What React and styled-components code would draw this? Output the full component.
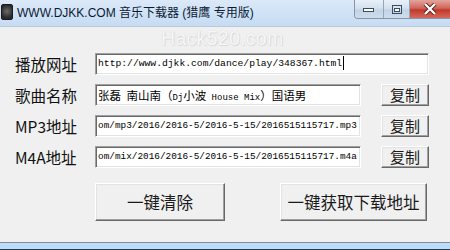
import React from "react";
import styled, { createGlobalStyle } from "styled-components";

const GlobalStyle = createGlobalStyle`
  html, body { margin: 0; padding: 0; background: #f0f0f0; }
  body { font-family: "Liberation Sans", "Noto Sans CJK SC", sans-serif; }
`;

const Window = styled.div`
  position: relative;
  width: 450px;
  height: 250px;
  display: flex;
  flex-direction: column;
  overflow: hidden;
  background: #f0f0f0;
`;

const TitleBar = styled.div`
  height: 26px;
  display: flex;
  align-items: flex-start;
  background: linear-gradient(#dbe9f8, #c6dcf3);
  border-bottom: 1px solid #b9c9da;
`;

const AppIcon = styled.div`
  width: 10px;
  height: 14px;
  margin: 4px 0 0 1px;
  border-radius: 2px;
  background: radial-gradient(circle at 50% 45%, #6b6b6b, #2a2a2a 70%);
  border: 1px solid #1a1a1a;
`;

const Title = styled.div`
  margin: 6px 0 0 4px;
  font-size: 12px;
  line-height: 15px;
  color: #0b1a33;
  white-space: nowrap;
`;

const Controls = styled.div`
  margin-left: auto;
  display: flex;
  height: 18px;
  border: 1px solid #8596ab;
  border-top: none;
  border-right: none;
  border-bottom-left-radius: 4px;
  overflow: hidden;
`;

const CtrlButton = styled.div`
  width: ${(p) => p.$w}px;
  height: 18px;
  display: flex;
  align-items: center;
  justify-content: center;
  background: ${(p) =>
    p.$close
      ? "linear-gradient(#e4a59c, #d0665b 45%, #c0392b 55%, #d46a5c)"
      : "linear-gradient(#e8eff8, #d5e1ef 45%, #c3d3e6 55%, #cedcec)"};
  border-right: ${(p) => (p.$close ? "none" : "1px solid #95a6bb")};
`;

const Client = styled.div`
  flex: 1;
  padding: 26px 0 0 15px;
  display: flex;
  flex-direction: column;
  gap: 9px;
`;

const Row = styled.div`
  width: 414px;
  height: 22px;
  display: flex;
  align-items: center;
`;

const Label = styled.div`
  width: 80px;
  flex: none;
  font-family: "Noto Sans CJK SC", sans-serif;
  font-size: 15.5px;
  color: #111;
  white-space: nowrap;
`;

const Field = styled.div`
  flex: 1;
  height: 22px;
  box-sizing: border-box;
  background: #fff;
  border: 1px solid;
  border-color: #a0a0a0 #ffffff #ffffff #a0a0a0;
  box-shadow: inset 1px 1px 0 #696969, inset -1px -1px 0 #e3e3e3;
  padding: 0 0 0 2px;
  overflow: hidden;
  white-space: pre;
  line-height: 20px;
  font-family: "Liberation Mono", "Noto Sans CJK SC", monospace;
  font-size: ${(p) => p.$size}px;
  color: #000;
`;

const Cjk = styled.span`
  font-family: "Noto Sans CJK SC", sans-serif;
  font-size: 11.5px;
`;

const Caret = styled.span`
  display: inline-block;
  width: 1px;
  height: 14px;
  margin-left: 1px;
  vertical-align: middle;
  background: #000;
`;

const CopyButton = styled.button`
  width: 48px;
  height: 22px;
  margin-left: 20px;
  flex: none;
  padding: 0;
  box-sizing: border-box;
  background: #f0f0f0;
  border: 1px solid;
  border-color: #ffffff #696969 #696969 #ffffff;
  box-shadow: inset -1px -1px 0 #a0a0a0, inset 1px 1px 0 #e3e3e3;
  font-family: "Noto Sans CJK SC", sans-serif;
  font-size: 15px;
  line-height: 20px;
  color: #1a1a1a;
`;

const Actions = styled.div`
  display: flex;
  gap: 55px;
  margin: 6px 0 0 80px;
`;

const BigButton = styled.button`
  width: ${(p) => p.$w}px;
  height: 38px;
  padding: 0;
  box-sizing: border-box;
  background: #f0f0f0;
  border: 1px solid;
  border-color: #ffffff #696969 #696969 #ffffff;
  box-shadow: inset -1px -1px 0 #a0a0a0, inset 1px 1px 0 #e3e3e3;
  font-family: "Noto Sans CJK SC", sans-serif;
  font-size: 16.5px;
  color: #1a1a1a;
`;

const BottomFrame = styled.div`
  height: 6px;
  background: #bcdcfb;
  border-top: 1px solid #8a8a8a;
  border-bottom: 1px solid #2c3947;
`;

const Watermark = styled.div`
  position: absolute;
  left: 161px;
  top: 27px;
  font-family: "Liberation Sans", sans-serif;
  font-size: 19.5px;
  letter-spacing: 0.3px;
  color: #f7f7f7;
  text-shadow: 0 0 1px #cdcdcd, 1px 1px 1px #dadada;
  pointer-events: none;
`;

const MinGlyph = () => (
  <svg width="12" height="6" viewBox="0 0 12 6">
    <rect x="0.5" y="2.5" width="10" height="3" fill="#fff" stroke="#3b4b60" />
  </svg>
);

const RestoreGlyph = () => (
  <svg width="10" height="9" viewBox="0 0 10 9">
    <rect x="0.5" y="0.5" width="9" height="8" fill="none" stroke="#3b4b60" />
    <rect x="2.5" y="3.5" width="5" height="3" fill="#fff" stroke="#3b4b60" />
  </svg>
);

const CloseGlyph = () => (
  <svg width="14" height="12" viewBox="0 0 14 12">
    <path d="M2 1 L12 11 M12 1 L2 11" stroke="#5a1a14" strokeWidth="4" />
    <path d="M2 1 L12 11 M12 1 L2 11" stroke="#fff" strokeWidth="2.4" />
  </svg>
);

const rows = [
  { label: "MP3地址", value: "om/mp3/2016/2016-5/2016-5-15/2016515115717.mp3" },
  { label: "M4A地址", value: "om/mix/2016/2016-5/2016-5-15/2016515115717.m4a" },
];

export default function App() {
  return (
    <>
      <GlobalStyle />
      <Window>
        <TitleBar>
          <AppIcon />
          <Title>WWW.DJKK.COM 音乐下载器 (猎鹰 专用版)</Title>
          <Controls>
            <CtrlButton $w={28}>
              <MinGlyph />
            </CtrlButton>
            <CtrlButton $w={25}>
              <RestoreGlyph />
            </CtrlButton>
            <CtrlButton $w={40} $close>
              <CloseGlyph />
            </CtrlButton>
          </Controls>
        </TitleBar>
        <Client>
          <Row>
            <Label>播放网址</Label>
            <Field $size={9.7}>
              http://www.djkk.com/dance/play/348367.html
              <Caret />
            </Field>
          </Row>
          <Row>
            <Label>歌曲名称</Label>
            <Field $size={9}>
              <Cjk>张磊</Cjk>{" "}<Cjk>南山南（</Cjk>Dj<Cjk>小波</Cjk> House Mix
              <Cjk>）国语男</Cjk>
            </Field>
            <CopyButton>复制</CopyButton>
          </Row>
          {rows.map((r) => (
            <Row key={r.label}>
              <Label>{r.label}</Label>
              <Field $size={9.4}>{r.value}</Field>
              <CopyButton>复制</CopyButton>
            </Row>
          ))}
          <Actions>
            <BigButton $w={130}>一键清除</BigButton>
            <BigButton $w={147}>一键获取下载地址</BigButton>
          </Actions>
        </Client>
        <BottomFrame />
        <Watermark>Hack520.com</Watermark>
      </Window>
    </>
  );
}
